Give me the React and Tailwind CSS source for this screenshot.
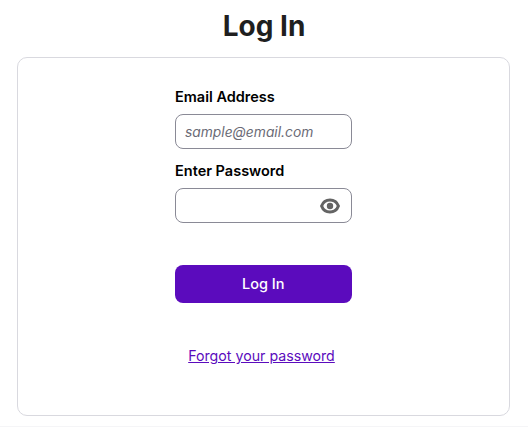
import React from "react";

function EyeIcon() {
  return (
    <svg width="20" height="16" viewBox="0 0 20 16" className="text-[#646464]">
      <path d="M10 2C6 2 2.9 4.4 1.6 8c1.3 3.6 4.400 6 8.4 6s7.100-2.400 8.400-6C17.100 4.400 14 2 10 2z" fill="none" stroke="currentColor" strokeWidth="3" />
      <circle cx="10" cy="8" r="3.2" fill="currentColor" />
    </svg>
  );
}

export default function App() {
  return (
    <div className="h-[427px] w-[528px] overflow-hidden bg-white font-['Inter',sans-serif]">
      <div className="h-[426px]">
        <h1 className="pt-[7px] text-center text-[28px] leading-[38px] font-bold text-[#1f1f1f]">Log In</h1>
        <div className="mt-[12px] ml-[17px] h-[359px] w-[493px] rounded-[10px] border border-[#d9d9df] bg-white">
          <form className="ml-[157px] w-[177px] pt-[29px]">
            <label className="block text-[14.5px] leading-5 font-semibold text-black">Email Address</label>
            <input
              placeholder="sample@email.com"
              className="mt-[7px] block h-[35px] w-[176.5px] rounded-lg border border-[#8a8a96] px-[9px] text-[13.8px] italic outline-none placeholder:text-[#6b6b76]"
            />
            <label className="mt-[12px] block text-[14.5px] leading-5 font-semibold text-black">Enter Password</label>
            <div className="relative mt-[7px] w-[176.5px]">
              <input type="password" className="block h-[35px] w-full rounded-lg border border-[#8a8a96] px-[9px] outline-none" />
              <span className="absolute top-[10px] right-[12px] flex">
                <EyeIcon />
              </span>
            </div>
            <button type="button" className="mt-[42px] block h-[38px] w-[176.5px] rounded-lg bg-[#5b0bbd] text-[14.5px] font-medium text-white">
              Log In
            </button>
            <div className="mt-[40px] w-[176px] pr-[3px] text-center">
              <a href="#" className="text-[14.2px] leading-5 text-[#5b0bbd] underline">Forgot your password</a>
            </div>
          </form>
        </div>
      </div>
      <div className="h-px bg-[#f5f5f7]" />
    </div>
  );
}
